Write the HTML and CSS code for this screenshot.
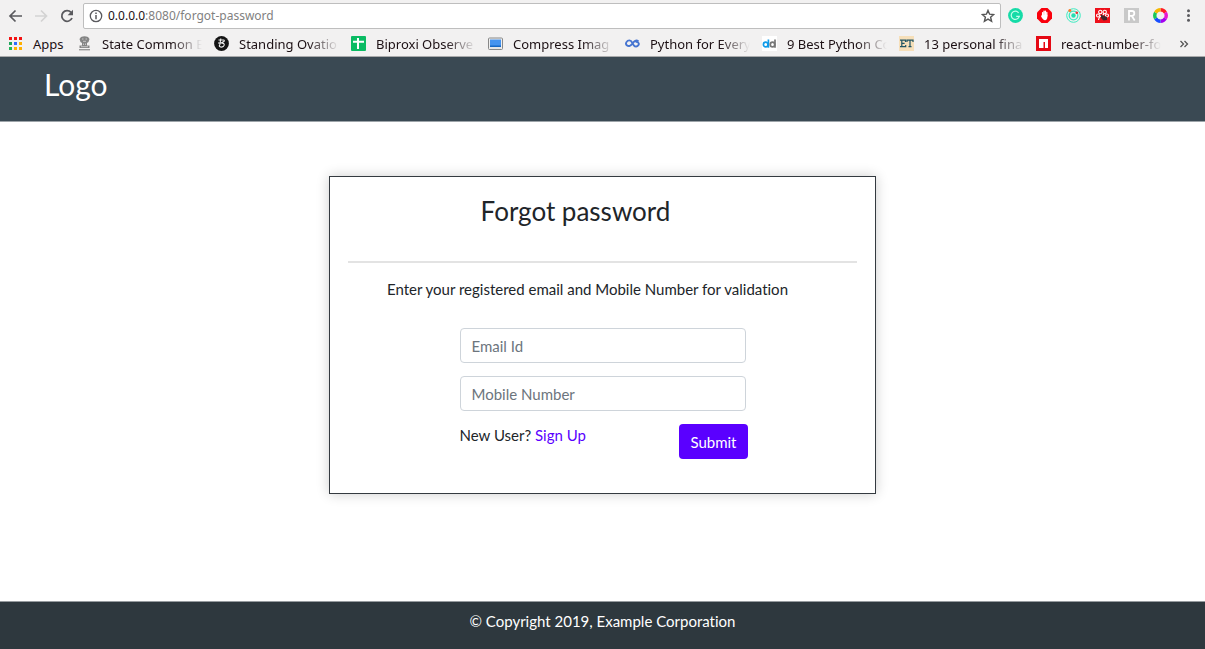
FILE: index.html
```html
<!DOCTYPE html>
<html lang="en">
<head>
<meta charset="utf-8">
<meta name="viewport" content="width=device-width, initial-scale=1">
<title>Forgot password</title>
<link rel="stylesheet" href="styles.css">
</head>
<body>
<div class="browser">
  <div class="toolbar">
    <button class="nav-button" type="button" aria-label="Back"><svg viewBox="0 0 14 14"><path d="M14 7H2M7.5 1.5L2 7L7.5 12.5" fill="none" stroke="#5a5a5e" stroke-width="1.7"/></svg></button>
    <button class="nav-button" type="button" aria-label="Forward" disabled><svg viewBox="0 0 14 14"><path d="M1 7H12M7 1.5L12.5 7L7 12.5" fill="none" stroke="#d3d3d3" stroke-width="1.7"/></svg></button>
    <button class="nav-button" type="button" aria-label="Reload"><svg viewBox="0 0 14 14"><path d="M12 9A5.3 5.3 0 1 1 11 3.4" fill="none" stroke="#5a5a5e" stroke-width="1.8"/><path d="M13 0.8V6.2H7.6Z" fill="#5a5a5e"/></svg></button>
    <div class="address">
      <svg class="info" viewBox="0 0 14 14"><circle cx="7" cy="7" r="5.7" fill="none" stroke="#5a5a5e" stroke-width="1.3"/><path d="M7 6V10.3M7 3.5V5" stroke="#5a5a5e" stroke-width="1.5"/></svg>
      <span class="url"><span class="host">0.0.0.0</span>:8080/forgot-password</span>
      <button class="star" type="button" aria-label="Bookmark this page"><svg viewBox="0 0 14 14"><path d="M7 1.4L8.6 5.2L12.7 5.5L9.6 8.2L10.6 12.3L7 10.1L3.4 12.3L4.4 8.2L1.3 5.5L5.4 5.2Z" fill="none" stroke="#555" stroke-width="1.4"/></svg></button>
    </div>
    <div class="extensions">
      <svg viewBox="0 0 15 15"><circle cx="7.5" cy="7.5" r="7.4" fill="#15dba7"/><path d="M10.6 4.8A4.1 4.1 0 1 0 11.3 8.4H8.2" fill="none" stroke="#c4ffeb" stroke-width="1.2"/></svg>
      <svg viewBox="0 0 15 15"><path d="M4.5 0H10.5L15 4.5V10.5L10.5 15H4.5L0 10.5V4.5Z" fill="#fa000c"/><path d="M5.6 8V4.6M7 7V3.2M8.4 7V3.2M9.8 8V4.4" stroke="#fff" stroke-width="1.3" stroke-linecap="round"/><path d="M5 6.8H10.4V9Q10.2 12 8 12.2Q6 12.2 4 8.2Z" fill="#fff"/></svg>
      <svg viewBox="0 0 15 15"><g fill="none" stroke="#3eeac0"><circle cx="7.5" cy="7.5" r="6.8"/><circle cx="7.5" cy="7.5" r="4.3" stroke-width="1.3"/></g><circle cx="7.5" cy="7.5" r="2.2" fill="#25dfb0"/><circle cx="3.8" cy="2.4" r="1.5" fill="#ff7b26"/><circle cx="10.8" cy="4.7" r="1.3" fill="#ed3333"/></svg>
      <svg viewBox="0 0 15 15"><path d="M0 0H15V15H0Z" fill="#ee101b"/><g fill="none" stroke="#fff" stroke-width="1.1"><circle cx="5.3" cy="4" r="1.7"/><circle cx="9.7" cy="4" r="1.7"/><circle cx="3" cy="7.5" r="1.5"/><circle cx="12" cy="7.5" r="1.5"/><path d="M3.5 12Q4 8 7.5 7.5L9 6"/></g><path d="M6 6.5L12 9V12L8.5 12.5L6 10Z" fill="#40252a"/></svg>
      <svg viewBox="0 0 15 15"><path d="M0 0H15V15H0Z" fill="#c9c9c9"/><path d="M5 12.5V3H8Q10.3 3 10.3 5.3Q10.3 7.8 8 7.8H5M7.8 8L10.7 12.5" fill="none" stroke="#fff" stroke-width="1.8"/></svg>
      <svg viewBox="0 0 15 15"><g fill="none" stroke-width="3.4"><path d="M7.5 1.8A5.7 5.7 0 0 1 12.4 4.6" stroke="#ff1b26"/><path d="M12.4 4.6A5.7 5.7 0 0 1 12.4 10.4" stroke="#e916d1"/><path d="M12.4 10.4A5.7 5.7 0 0 1 7.5 13.2" stroke="#a400f0"/><path d="M7.5 13.2A5.7 5.7 0 0 1 2.6 10.4" stroke="#174dff"/><path d="M2.6 10.4A5.7 5.7 0 0 1 2.6 4.6" stroke="#18c858"/><path d="M2.6 4.6A5.7 5.7 0 0 1 7.5 1.8" stroke="#f6b800"/></g></svg>
      <button class="menu" type="button" aria-label="Menu"><svg viewBox="0 0 15 15"><g fill="#5a5a5e"><circle cx="7.5" cy="2.8" r="1.5"/><circle cx="7.5" cy="7.5" r="1.5"/><circle cx="7.5" cy="12.2" r="1.5"/></g></svg></button>
    </div>
  </div>
  <nav class="bookmarks" aria-label="Bookmarks">
    <a class="bookmark apps" href="#"><svg viewBox="0 0 15 15"><path d="M1 1h3v3H1zM6 1h3v3H6zM11 1h3v3h-3z" fill="#f31212"/><path d="M1 6h3v3H1z" fill="#20a45b"/><path d="M6 6h3v3H6z" fill="#306bff"/><path d="M11 6h3v3h-3zM6 11h3v3H6zM11 11h3v3h-3z" fill="#ffb000"/><path d="M1 11h3v3H1z" fill="#20b558"/></svg><span>Apps</span></a>
    <a class="bookmark" href="#"><svg viewBox="0 0 15 15"><path d="M4 1Q7.5 -.5 11 1L12.5 3L11.5 6L10 7V9.5H12.5V12H2.5V9.5H5V7L3.5 6L2.5 3Z" fill="#858585"/><path d="M2 13.7H13" stroke="#999" stroke-width="1.4"/><path d="M5 3H6.5M8.5 3H10M6 5.3H9M6.5 7.5V9M8.5 7.5V9M4 10.7H11" stroke="#d7d7d7" stroke-width=".8"/></svg><span>State Common E</span></a>
    <a class="bookmark" href="#"><svg viewBox="0 0 15 15"><circle cx="7.5" cy="7.5" r="7.4" fill="#151515"/><path d="M4.5 4H9.5Q11 4.2 9.8 5.6L7.2 7Q10.6 7 10.2 9.2Q9.5 11.5 6.6 11Q4.4 10.2 5.8 8.8M4 7H7.2M6.8 2.5L5.8 8.8" fill="none" stroke="#f3f3f3" stroke-width="1.1"/></svg><span>Standing Ovatio</span></a>
    <a class="bookmark" href="#"><svg viewBox="0 0 15 15"><rect width="15" height="15" rx="1" fill="#0abb63"/><path d="M7 2V13M2 5.7H13" stroke="#fff" stroke-width="2"/></svg><span>Biproxi Observe</span></a>
    <a class="bookmark" href="#"><svg viewBox="0 0 15 15"><rect x=".5" y="2" width="14" height="11.5" rx="1" fill="#eee" stroke="#888"/><path d="M2 3.5H13V11H2Z" fill="#4694ef"/><path d="M2 9.5H13V11H2Z" fill="#1768c4"/><path d="M2 12H13" stroke="#ddd"/></svg><span>Compress Imag</span></a>
    <a class="bookmark" href="#"><svg viewBox="0 0 15 15"><path d="M13.5 5.5C11 3.3 9.2 5.2 7.5 7.5S3.8 11 1.8 9.2S2 4.4 4.4 4.4S7.3 7.5 8.8 9.3S12.1 10.9 13.4 9.1S12.5 5.2 10.5 6.2" fill="none" stroke="#4775d1" stroke-width="1.9"/></svg><span>Python for Every</span></a>
    <a class="bookmark" href="#"><svg viewBox="0 0 15 15"><path d="M0 0H15V15H0Z" fill="#fff"/><g fill="none" stroke-width="1.7"><g stroke="#109be9"><ellipse cx="3.7" cy="8.5" rx="2.3" ry="2.4"/><path d="M6.4 3.5V11.7"/></g><g stroke="#777"><ellipse cx="10.5" cy="8.5" rx="2.2" ry="2.4"/><path d="M13 3.5V11.7"/></g></g></svg><span>9 Best Python Co</span></a>
    <a class="bookmark" href="#"><svg viewBox="0 0 15 15"><path d="M0 0H15V15H0Z" fill="#f6dfb9"/><path d="M1 4.2H6.5V6M2.8 4V10.5M1 10.7H6.7V9M3 7.4H5.6M8 6V4.2H14V6M11 4V10.7M9.5 10.7H12.5" fill="none" stroke="#205564" stroke-width="1.2"/></svg><span>13 personal fina</span></a>
    <a class="bookmark" href="#"><svg viewBox="0 0 15 15"><path d="M0 0H15V15H0Z" fill="#e50914"/><path d="M3 3H12V12H9V6H7.5V12H3Z" fill="#fff"/></svg><span>react-number-fo</span></a>
    <button class="more" type="button" aria-label="More bookmarks"><svg viewBox="0 0 10 10"><path d="M1.5 2L4.5 5L1.5 8M5.5 2L8.5 5L5.5 8" fill="none" stroke="#555" stroke-width="1.3"/></svg></button>
  </nav>
</div>
<header class="site-header"><span class="logo">Logo</span></header>
<main class="content">
  <section class="card">
    <h1 class="title">Forgot password</h1>
    <hr class="divider">
    <p class="instructions">Enter your registered email and Mobile Number for validation</p>
    <form class="form">
      <input class="field" type="email" placeholder="Email Id" aria-label="Email Id">
      <input class="field" type="tel" placeholder="Mobile Number" aria-label="Mobile Number">
      <div class="actions">
        <span>New User? <a class="signup" href="#">Sign Up</a></span>
        <button class="submit" type="submit">Submit</button>
      </div>
    </form>
  </section>
</main>
<footer class="site-footer">© Copyright 2019, Example Corporation</footer>
</body>
</html>
```
FILE: styles.css
```css
* {
  box-sizing: border-box;
}

body {
  margin: 0;
  min-height: 100vh;
  display: flex;
  flex-direction: column;
  background: #fff;
  color: #212529;
  font: 15px/22px Lato, sans-serif;
  font-variant-ligatures: none;
}

button {
  font: inherit;
  border: 0;
  padding: 0;
  background: none;
}

svg {
  display: block;
  flex: none;
}

.browser {
  background: #f2f1f1;
  border-bottom: 1px solid #a9aaab;
  color: #1c1014;
  font: 13px/18px "Noto Sans", sans-serif;
}

.toolbar {
  display: flex;
  align-items: center;
  height: 31px;
  padding: 0 9px 0 8px;
}

.nav-button {
  width: 14px;
  margin-right: 12px;
}

.nav-button:nth-child(3) {
  margin-right: 9px;
}

.address {
  flex: 1;
  display: flex;
  align-items: center;
  height: 26px;
  padding: 0 5px;
  background: #fff;
  border: 1px solid #bebebe;
  border-radius: 2px;
}

.info {
  width: 14px;
  margin-right: 5px;
}

.url {
  flex: 1;
  color: #818181;
  font-size: 12px;
}

.host {
  color: #1c1014;
}

.star {
  width: 14px;
}

.extensions {
  display: flex;
  align-items: center;
  gap: 14px;
  margin-left: 7px;
}

.extensions svg {
  width: 15px;
}

.menu {
  margin-left: -1px;
}

.bookmarks {
  display: flex;
  align-items: center;
  gap: 12px;
  height: 25px;
  padding: 0 16px 0 8px;
}

.bookmark {
  display: flex;
  align-items: center;
  gap: 10px;
  flex: none;
  width: 125px;
  color: inherit;
  text-decoration: none;
  white-space: nowrap;
}

.bookmark svg {
  width: 15px;
}

.bookmark span {
  flex: 1;
  min-width: 0;
  mask-image: linear-gradient(to right, #000 70%, transparent);
}

.bookmark.apps {
  width: 57px;
}

.bookmark.apps span {
  mask-image: none;
}

.more {
  width: 10px;
  margin-left: auto;
}

.site-header {
  padding: 7px 44px 17px;
  background: #3a4953;
  border-bottom: 1px solid #9da4a9;
  color: #fff;
}

.logo {
  display: block;
  font-size: 30px;
  line-height: 40px;
}

.content {
  flex: 1;
  padding: 54px 16px;
}

.card {
  max-width: 547px;
  margin: 0 auto;
  padding: 18px 18px 34px;
  border: 1px solid #343a40;
  box-shadow: 0 0 12px rgba(0, 0, 0, 0.2);
}

.title {
  margin: 0;
  padding-right: 54px;
  font-size: 26px;
  font-weight: 400;
  line-height: 32px;
  text-align: center;
}

.divider {
  margin: 34px 0 15px;
  border: 0;
  border-top: 2px solid #e3e3e3;
}

.instructions {
  margin: 0 0 28px;
  padding-right: 30px;
  text-align: center;
}

.form {
  max-width: 286px;
  margin: 0 auto;
}

.field {
  display: block;
  width: 100%;
  height: 35px;
  margin-bottom: 13px;
  padding: 0 11px;
  border: 1px solid #ced4da;
  border-radius: 4px;
  background: #fff;
  color: #495057;
  font: inherit;
}

.field::placeholder {
  color: #6c757d;
  opacity: 1;
}

.actions {
  display: flex;
  justify-content: space-between;
  margin-right: -2px;
}

.signup {
  color: #5a00ff;
  text-decoration: none;
}

.submit {
  height: 35px;
  padding: 0 11px;
  border-radius: 4px;
  background: #5a00ff;
  color: #fff;
}

.site-footer {
  height: 48px;
  padding: 8px 16px;
  background: #2e383e;
  border-top: 1px solid #969b9f;
  color: #fff;
  text-align: center;
}
```
